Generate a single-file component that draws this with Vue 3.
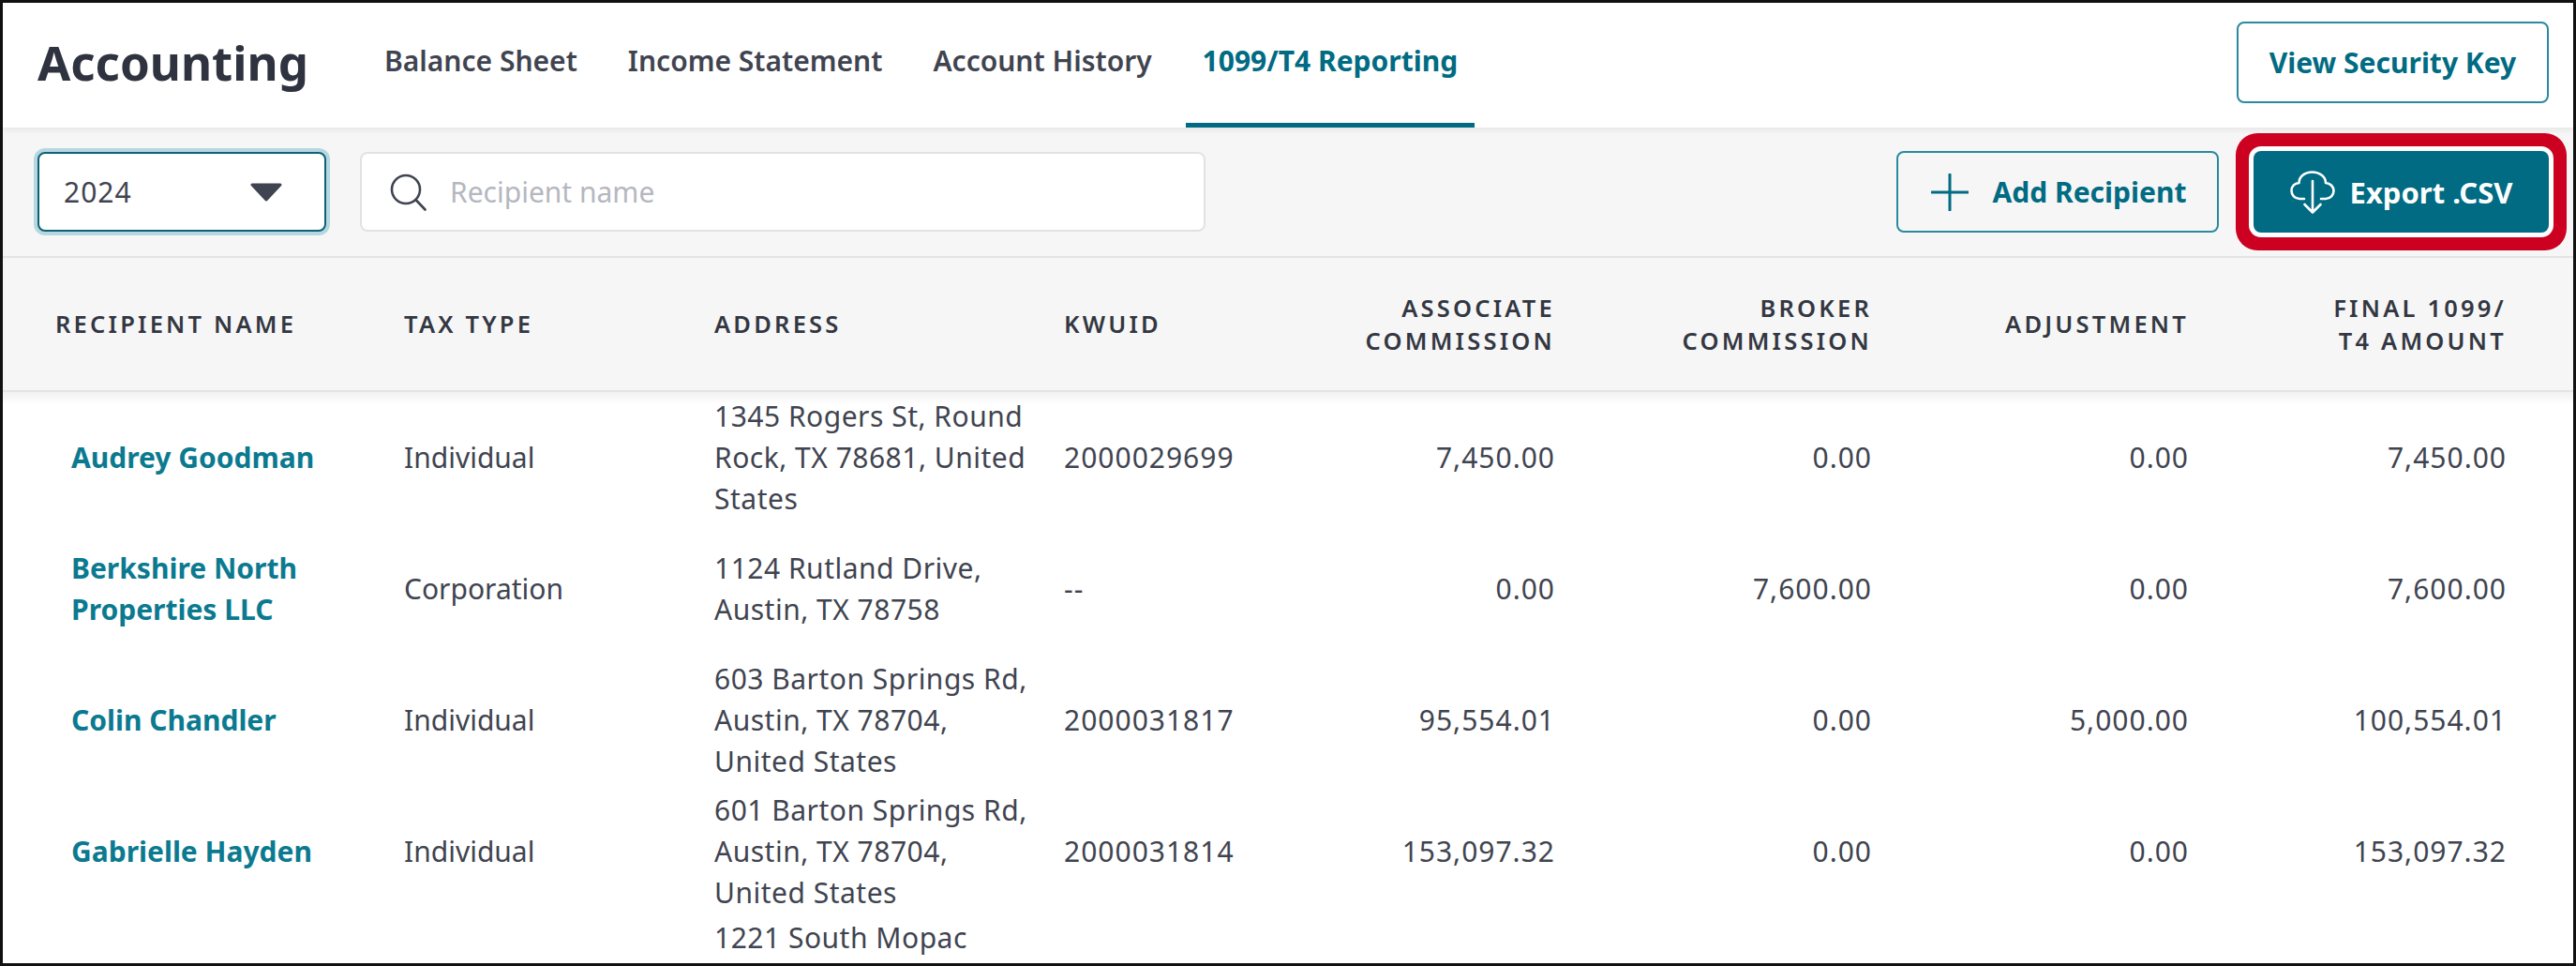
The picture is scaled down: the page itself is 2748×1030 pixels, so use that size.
<template>
  <div class="frame">
    <header class="topbar">
      <h1>Accounting</h1>
      <nav class="tabs">
        <a v-for="tab in tabs" :key="tab" class="tab" :class="{ active: tab === activeTab }">{{ tab }}</a>
      </nav>
      <button class="btn outline security">View Security Key</button>
    </header>

    <div class="toolbar">
      <div class="year">
        <span>2024</span>
        <svg class="caret" viewBox="0 0 36 20"><path d="M3 2h30L18 18z" fill="#3f4450" stroke="#3f4450" stroke-width="3" stroke-linejoin="round" /></svg>
      </div>
      <div class="search">
        <svg class="search-icon" viewBox="0 0 40 40" fill="none" stroke="#3f4450" stroke-width="2.6" stroke-linecap="round">
          <circle cx="17" cy="17" r="15" />
          <path d="M27.500 28l10 10.500" />
        </svg>
        <span class="placeholder">Recipient name</span>
      </div>
      <div class="actions">
        <button class="btn outline add">
          <svg class="plus" viewBox="0 0 40 40" fill="none" stroke="#006b82" stroke-width="3" stroke-linecap="round"><path d="M20 1v38M1 20h38" /></svg>
          Add Recipient
        </button>
        <button class="btn export">
          <svg class="cloud" viewBox="0 0 48 46" fill="none" stroke="#fff" stroke-width="2.6" stroke-linecap="round" stroke-linejoin="round">
            <path d="M15 30H10C5 30 1.500 26 1.500 21.500C1.500 17 4.500 13.500 9.500 13C9.500 6.500 15.500 1.500 23.500 1.500C31.500 1.500 38 6.500 38 13C43 13.500 46.500 17 46.500 21.500C46.500 26 43 30 38 30H33" />
            <path d="M24 11v33M15.500 36l8.500 8.500 8.500-8.500" />
          </svg>
          Export .CSV
        </button>
      </div>
    </div>

    <table class="grid">
      <colgroup>
        <col v-for="(w, i) in colWidths" :key="i" :style="{ width: w + 'px' }" />
      </colgroup>
      <thead>
        <tr>
          <th>Recipient Name</th>
          <th>Tax Type</th>
          <th>Address</th>
          <th>KWUID</th>
          <th class="num">Associate<br />Commission</th>
          <th class="num">Broker<br />Commission</th>
          <th class="num">Adjustment</th>
          <th class="num">Final 1099/<br />T4 Amount</th>
        </tr>
      </thead>
      <tbody>
        <tr v-for="row in rows" :key="row.address">
          <td class="name">{{ row.name }}</td>
          <td>{{ row.type }}</td>
          <td class="address">{{ row.address }}</td>
          <td class="digits">{{ row.kwuid }}</td>
          <td class="num digits">{{ row.associate }}</td>
          <td class="num digits">{{ row.broker }}</td>
          <td class="num digits">{{ row.adjustment }}</td>
          <td class="num digits">{{ row.total }}</td>
        </tr>
      </tbody>
    </table>
  </div>
</template>

<script setup>
const tabs = ['Balance Sheet', 'Income Statement', 'Account History', '1099/T4 Reporting']
const activeTab = '1099/T4 Reporting'
const colWidths = [409, 331, 373, 221, 338, 338, 338, 394]

const rows = [
  { name: 'Audrey Goodman', type: 'Individual', address: '1345 Rogers St, Round Rock, TX 78681, United States', kwuid: '2000029699', associate: '7,450.00', broker: '0.00', adjustment: '0.00', total: '7,450.00' },
  { name: 'Berkshire North Properties LLC', type: 'Corporation', address: '1124 Rutland Drive, Austin, TX 78758', kwuid: '--', associate: '0.00', broker: '7,600.00', adjustment: '0.00', total: '7,600.00' },
  { name: 'Colin Chandler', type: 'Individual', address: '603 Barton Springs Rd, Austin, TX 78704, United States', kwuid: '2000031817', associate: '95,554.01', broker: '0.00', adjustment: '5,000.00', total: '100,554.01' },
  { name: 'Gabrielle Hayden', type: 'Individual', address: '601 Barton Springs Rd, Austin, TX 78704, United States', kwuid: '2000031814', associate: '153,097.32', broker: '0.00', adjustment: '0.00', total: '153,097.32' },
  { name: '', type: '', address: '1221 South Mopac', kwuid: '', associate: '', broker: '', adjustment: '', total: '' }
]
</script>

<style>
html, body { margin: 0; background: #fff; }
</style>

<style scoped>
.frame {
  box-sizing: border-box;
  width: 2748px;
  height: 1030px;
  border: 3px solid #111;
  overflow: hidden;
  background: #fff;
  color: #3f4450;
  font-family: "Noto Sans", sans-serif;
  font-size: 30px;
}
.topbar {
  display: flex;
  align-items: center;
  height: 133px;
  padding: 0 26px 0 37px;
  box-sizing: border-box;
  position: relative;
  z-index: 1;
  box-shadow: 0 2px 6px rgba(0, 0, 0, 0.08);
}
h1 {
  margin: 0 0 8px;
  font-size: 51px;
  font-weight: 700;
  color: #2f3340;
  width: 370px;
}
.tabs { display: flex; gap: 54px; align-self: stretch; }
.tab {
  display: flex;
  align-items: center;
  height: 100%;
  box-sizing: border-box;
  padding: 0 18px 6px;
  margin: 0 -18px;
  font-size: 30px;
  font-weight: 600;
  border-bottom: 5px solid transparent;
}
.tab.active { color: #006b82; border-bottom-color: #006b82; font-weight: 700; }
.btn {
  font-family: inherit;
  font-size: 30px;
  font-weight: 700;
  border-radius: 8px;
  display: flex;
  align-items: center;
  justify-content: center;
  box-sizing: border-box;
}
.outline {
  background: transparent;
  border: 2px solid #2b8a9e;
  color: #006b82;
}
.security { margin-left: auto; margin-bottom: 6px; width: 333px; height: 87px; }
.toolbar {
  display: flex;
  align-items: center;
  height: 139px;
  padding: 0 26px 0 37px;
  gap: 36px;
  box-sizing: border-box;
  background: #f6f6f6;
  border-bottom: 2px solid #e4e4e4;
}
.year {
  width: 308px;
  height: 85px;
  box-sizing: border-box;
  display: flex;
  align-items: center;
  justify-content: space-between;
  padding: 0 44px 0 26px;
  background: #fff;
  border: 2px solid #0f6273;
  border-radius: 8px;
  box-shadow: 0 0 0 4px #b5d8e0;
  letter-spacing: 1px;
}
.caret { width: 36px; height: 20px; }
.search {
  width: 902px;
  height: 85px;
  box-sizing: border-box;
  display: flex;
  align-items: center;
  gap: 24px;
  padding: 0 30px;
  background: #fff;
  border: 2px solid #e2e2e4;
  border-radius: 8px;
}
.search-icon { width: 40px; height: 40px; flex: none; }
.placeholder { color: #b5b7c0; }
.actions { margin-left: auto; display: flex; gap: 37px; }
.add { width: 344px; height: 87px; gap: 26px; padding-left: 8px; }
.plus { width: 40px; height: 40px; }
.export {
  width: 315px;
  height: 87px;
  gap: 16px;
  border: 0;
  background: #006b82;
  color: #fff;
  font-size: 31px;
  box-shadow: 0 0 0 5px #fff, 0 0 0 19px #cc0020;
}
.cloud { width: 48px; height: 46px; }
.grid {
  table-layout: fixed;
  border-collapse: separate;
  border-spacing: 0;
  width: 2742px;
}
thead tr { height: 143px; }
th {
  padding: 0 16px 0 19px;
  text-align: left;
  font-size: 25.5px;
  line-height: 35px;
  font-weight: 600;
  letter-spacing: 3.2px;
  text-transform: uppercase;
  color: #333742;
  background: #f6f6f6;
  border-bottom: 2px solid #e4e4e4;
}
th:first-child { padding-left: 56px; }
th:last-child, td:last-child { padding-right: 71px; }
tbody tr { height: 140px; }
tbody tr:first-child td { background: linear-gradient(rgba(0, 0, 0, 0.05), transparent 14px); }
td {
  padding: 0 16px 0 19px;
  line-height: 44px;
  vertical-align: middle;
}
tbody tr:last-child td { vertical-align: top; padding-top: 0; }
.num { text-align: right; }
.name { color: #0b7a90; font-weight: 700; padding-left: 73px; }
.address { letter-spacing: 0.5px; padding-right: 19px; }
.digits { letter-spacing: 1px; }
</style>
